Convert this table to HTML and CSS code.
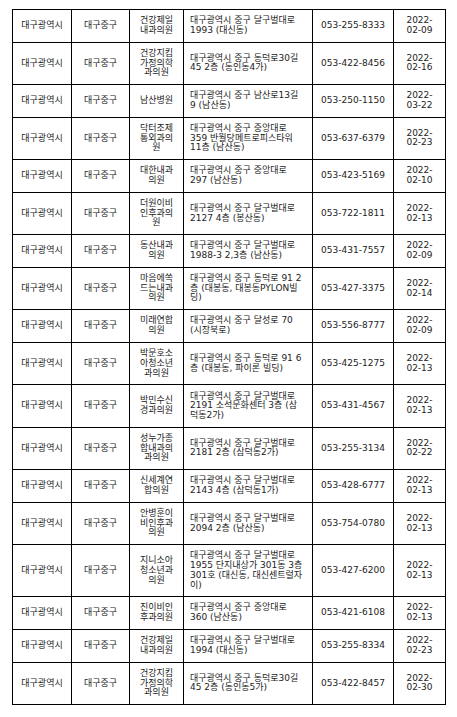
FILE: index.html
```html
<!DOCTYPE html>
<html lang="ko">
<head>
<meta charset="utf-8">
<title>의원 목록</title>
<link rel="stylesheet" href="styles.css">
</head>
<body>
<table class="list">
<colgroup>
<col class="c-city"><col class="c-gu"><col class="c-name"><col class="c-addr"><col class="c-tel"><col class="c-date">
</colgroup>
<tbody>
<tr><td>대구광역시</td><td>대구중구</td><td class="name">건강제일내과의원</td><td class="addr">대구광역시 중구 달구벌대로 1993 (대신동)</td><td>053-255-8333</td><td class="date">2022-02-09</td></tr>
<tr><td>대구광역시</td><td>대구중구</td><td class="name">건강지킴가정의학과의원</td><td class="addr">대구광역시 중구 동덕로30길 45 2층 (동인동4가)</td><td>053-422-8456</td><td class="date">2022-02-16</td></tr>
<tr><td>대구광역시</td><td>대구중구</td><td class="name">남산병원</td><td class="addr">대구광역시 중구 남산로13길 9 (남산동)</td><td>053-250-1150</td><td class="date">2022-03-22</td></tr>
<tr><td>대구광역시</td><td>대구중구</td><td class="name">닥터조제통외과의원</td><td class="addr">대구광역시 중구 중앙대로 359 반월당메트로피스타워 11층 (남산동)</td><td>053-637-6379</td><td class="date">2022-02-23</td></tr>
<tr><td>대구광역시</td><td>대구중구</td><td class="name">대한내과의원</td><td class="addr">대구광역시 중구 중앙대로 297 (남산동)</td><td>053-423-5169</td><td class="date">2022-02-10</td></tr>
<tr><td>대구광역시</td><td>대구중구</td><td class="name">더원이비인후과의원</td><td class="addr">대구광역시 중구 달구벌대로 2127 4층 (봉산동)</td><td>053-722-1811</td><td class="date">2022-02-13</td></tr>
<tr><td>대구광역시</td><td>대구중구</td><td class="name">동산내과의원</td><td class="addr">대구광역시 중구 달구벌대로 1988-3 2,3층 (남산동)</td><td>053-431-7557</td><td class="date">2022-02-09</td></tr>
<tr><td>대구광역시</td><td>대구중구</td><td class="name">마음에쏙드는내과의원</td><td class="addr">대구광역시 중구 동덕로 91 2층 (대봉동, 대봉동PYLON빌딩)</td><td>053-427-3375</td><td class="date">2022-02-14</td></tr>
<tr><td>대구광역시</td><td>대구중구</td><td class="name">미래연합의원</td><td class="addr">대구광역시 중구 달성로 70 (시장북로)</td><td>053-556-8777</td><td class="date">2022-02-09</td></tr>
<tr><td>대구광역시</td><td>대구중구</td><td class="name">박문호소아청소년과의원</td><td class="addr">대구광역시 중구 동덕로 91 6층 (대봉동, 파이론 빌딩)</td><td>053-425-1275</td><td class="date">2022-02-13</td></tr>
<tr><td>대구광역시</td><td>대구중구</td><td class="name">박민수신경과의원</td><td class="addr">대구광역시 중구 달구벌대로 2191 소석문화센터 3층 (삼덕동2가)</td><td>053-431-4567</td><td class="date">2022-02-13</td></tr>
<tr><td>대구광역시</td><td>대구중구</td><td class="name">성누가종합내과의과의원</td><td class="addr">대구광역시 중구 달구벌대로 2181 2층 (삼덕동2가)</td><td>053-255-3134</td><td class="date">2022-02-22</td></tr>
<tr><td>대구광역시</td><td>대구중구</td><td class="name">신세계연합의원</td><td class="addr">대구광역시 중구 달구벌대로 2143 4층 (삼덕동1가)</td><td>053-428-6777</td><td class="date">2022-02-13</td></tr>
<tr><td>대구광역시</td><td>대구중구</td><td class="name">안병훈이비인후과의원</td><td class="addr">대구광역시 중구 달구벌대로 2094 2층 (남산동)</td><td>053-754-0780</td><td class="date">2022-02-13</td></tr>
<tr><td>대구광역시</td><td>대구중구</td><td class="name">지니소아청소년과의원</td><td class="addr">대구광역시 중구 달구벌대로 1955 단지내상가 301동 3층 301호 (대신동, 대신센트럴자이)</td><td>053-427-6200</td><td class="date">2022-02-13</td></tr>
<tr><td>대구광역시</td><td>대구중구</td><td class="name">진이비인후과의원</td><td class="addr">대구광역시 중구 중앙대로 360 (남산동)</td><td>053-421-6108</td><td class="date">2022-02-13</td></tr>
<tr><td>대구광역시</td><td>대구중구</td><td class="name">건강제일내과의원</td><td class="addr">대구광역시 중구 달구벌대로 1994 (대신동)</td><td>053-255-8334</td><td class="date">2022-02-23</td></tr>
<tr><td>대구광역시</td><td>대구중구</td><td class="name">건강지킴가정의학과의원</td><td class="addr">대구광역시 중구 동덕로30길 45 2층 (동인동5가)</td><td>053-422-8457</td><td class="date">2022-02-30</td></tr>
</tbody>
</table>
</body>
</html>
```
FILE: styles.css
```css
html, body {
  margin: 0;
  padding: 0;
  background: #ffffff;
}

body {
  padding: 9px 12px 0 12px;
  font-family: "DejaVu Sans", "Noto Sans CJK KR", sans-serif;
  font-size: 9px;
  line-height: 9.7px;
  color: #222222;
}

.list {
  border-collapse: collapse;
  table-layout: fixed;
  width: 433px;
}

.c-city { width: 59px; }
.c-gu { width: 58px; }
.c-name { width: 54px; }
.c-addr { width: 129px; }
.c-tel { width: 81px; }
.c-date { width: 52px; }

.list td {
  border: 1px solid #000000;
  padding: 6.15px 6px;
  text-align: center;
  vertical-align: middle;
}

.list td.name {
  padding-left: 8px;
  padding-right: 8px;
}

.list td.addr {
  text-align: left;
  padding-left: 6px;
  padding-right: 8px;
}

.list td.date {
  padding-left: 6px;
  padding-right: 6px;
}
```
